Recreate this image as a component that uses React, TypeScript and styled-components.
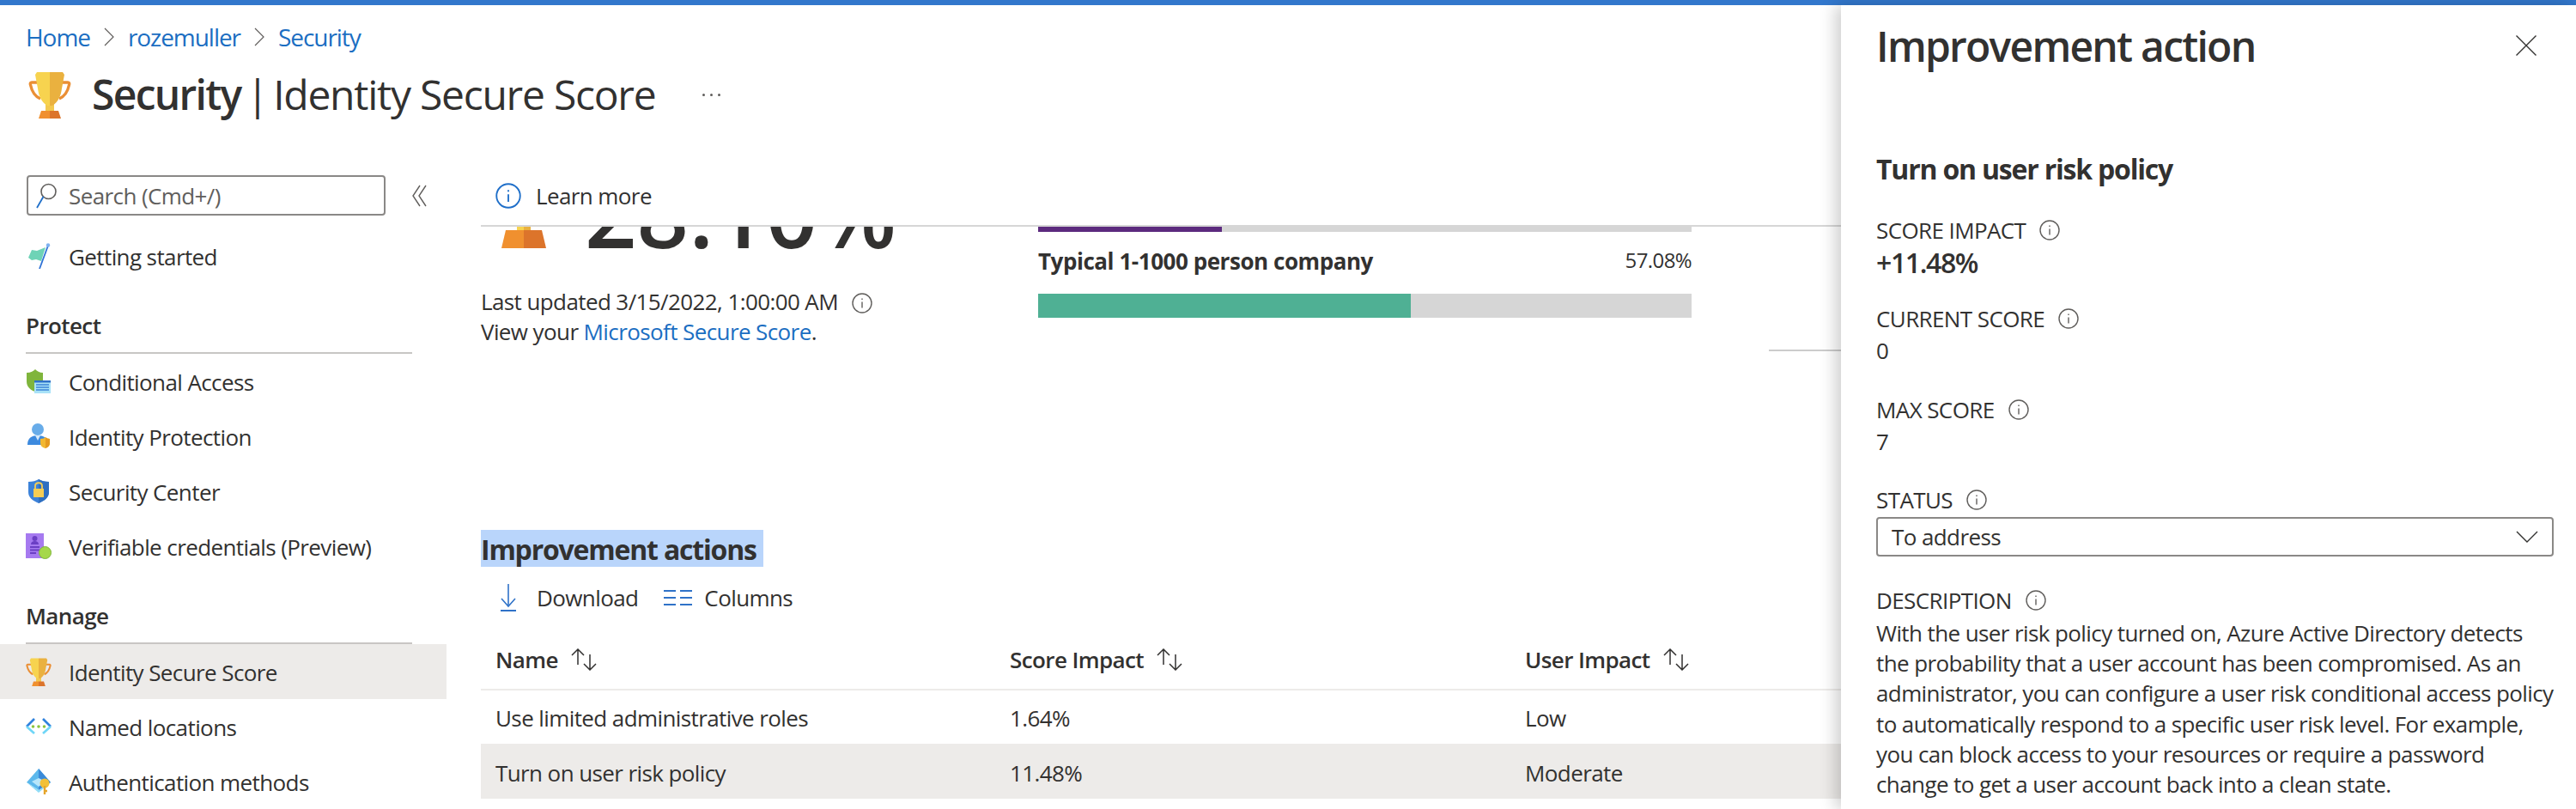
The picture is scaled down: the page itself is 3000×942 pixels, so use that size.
import React from 'react';
import styled, { createGlobalStyle } from 'styled-components';

const GlobalStyle = createGlobalStyle`
  html, body {
    margin: 0;
    padding: 0;
    background: #ffffff;
  }
  body {
    font-family: 'Open Sans', 'Noto Sans', sans-serif;
    font-size: 26px;
    letter-spacing: -0.6px;
    color: #323130;
  }
`;

const Page = styled.div`
  width: 3000px;
  height: 942px;
  overflow: hidden;
  display: flex;
  flex-direction: column;
`;

const TopBar = styled.div`
  height: 6px;
  flex: none;
  background: #3277cc;
`;

const Body = styled.div`
  flex: 1;
  display: flex;
  min-height: 0;
`;

const Main = styled.main`
  width: 2144px;
  flex: none;
  overflow: hidden;
`;

const Breadcrumb = styled.nav`
  height: 34px;
  margin: 20px 0 0 30px;
  display: flex;
  align-items: center;
  gap: 16px;
  font-size: 28px;
  letter-spacing: -1.05px;
`;

const Crumb = styled.a`
  color: #1b6ec2;
`;

const TitleRow = styled.header`
  height: 64px;
  margin: 18px 0 62px 33px;
  display: flex;
  align-items: center;
`;

const PageTitle = styled.h1`
  margin: 0 0 0 24px;
  font-size: 48px;
  font-weight: 400;
  letter-spacing: -1.25px;
  line-height: 64px;
  b {
    font-weight: 600;
    letter-spacing: -1.7px;
  }
`;

const TitleDivider = styled.span`
  margin: 0 -5px;
`;

const MoreDots = styled.span`
  margin-left: 55px;
  display: flex;
  gap: 6px;
  i {
    width: 3px;
    height: 3px;
    border-radius: 50%;
    background: #605e5c;
  }
`;

const Workspace = styled.div`
  display: flex;
`;

const Sidebar = styled.aside`
  width: 520px;
  flex: none;
`;

const SearchRow = styled.div`
  display: flex;
  align-items: center;
  margin: 0 0 15px 31px;
  gap: 31px;
`;

const SearchBox = styled.div`
  box-sizing: border-box;
  width: 418px;
  height: 47px;
  border: 2px solid #8a8886;
  border-radius: 4px;
  display: flex;
  align-items: center;
  padding-left: 9px;
  gap: 14px;
  color: #605e5c;
`;

const NavItem = styled.div<{ $active?: boolean }>`
  height: 64px;
  display: flex;
  align-items: center;
  padding-left: 30px;
  gap: 20px;
  background: ${(props) => (props.$active ? '#edebe9' : 'transparent')};
`;

const NavLabel = styled.span`
  position: relative;
  top: 1px;
`;

const NavSection = styled.div`
  box-sizing: border-box;
  height: 82px;
  margin: 0 40px 0 30px;
  padding-top: 31px;
  line-height: 36px;
  font-weight: 600;
  border-bottom: 2px solid #c8c6c4;
`;

const Content = styled.section`
  flex: 1;
  min-width: 0;
  margin-left: 40px;
`;

const CommandBar = styled.div`
  box-sizing: border-box;
  height: 60px;
  padding: 0 0 11px 17px;
  display: flex;
  align-items: center;
  gap: 17px;
  border-bottom: 2px solid #d6d6d6;
`;

const ScoreArea = styled.div`
  height: 353px;
  display: flex;
`;

const ScoreColumn = styled.div`
  width: 649px;
  flex: none;
`;

const ClippedScore = styled.div`
  height: 27px;
  overflow: hidden;
  display: flex;
  align-items: flex-start;
  padding-left: 24px;
`;

const ScoreValue = styled.div`
  margin: -69px 0 0 45px;
  font-size: 106px;
  font-weight: 600;
  letter-spacing: 0;
  line-height: 1;
  white-space: nowrap;
`;

const ScoreMeta = styled.div`
  margin-top: 43px;
  line-height: 35px;
  a {
    color: #1b6ec2;
  }
`;

const InlineInfo = styled.span`
  display: inline-flex;
  vertical-align: -4px;
  margin-left: 16px;
`;

const CompareColumn = styled.div`
  width: 761px;
  flex: none;
`;

const Track = styled.div<{ $height: number }>`
  height: ${(props) => props.$height}px;
  background: #d6d6d6;
`;

const Fill = styled.div<{ $color: string }>`
  height: 100%;
  background: ${(props) => props.$color};
`;

const CompareLabel = styled.div`
  box-sizing: border-box;
  height: 72px;
  padding-bottom: 4px;
  display: flex;
  align-items: center;
  justify-content: space-between;
  font-weight: 700;
  letter-spacing: -0.45px;
`;

const ComparePercent = styled.span`
  font-size: 24px;
  font-weight: 400;
  letter-spacing: -0.6px;
  position: relative;
  top: -2px;
`;

const FadedRule = styled.div`
  flex: 1;
  height: 2px;
  margin: 143px 0 0 90px;
  background: #cccccc;
`;

const SectionHeading = styled.h2`
  margin: 0;
  height: 43px;
  font-size: 32px;
  font-weight: 700;
  letter-spacing: -1.2px;
  line-height: 45px;
`;

const Selected = styled.span`
  display: inline-block;
  height: 43px;
  background: #b9d5fb;
  width: 329px;
`;

const Toolbar = styled.div`
  box-sizing: border-box;
  height: 76px;
  padding: 0 0 4px 23px;
  display: flex;
  align-items: center;
`;

const ToolButton = styled.div<{ $gap: number }>`
  display: flex;
  align-items: center;
  gap: ${(props) => props.$gap}px;
  margin-right: 30px;
`;

const TableHead = styled.div`
  box-sizing: border-box;
  height: 68px;
  margin-bottom: -2px;
  padding-bottom: 3px;
  border-bottom: 2px solid #edebe9;
  display: grid;
  grid-template-columns: 599px 600px 1fr;
  align-items: center;
  font-weight: 600;
`;

const HeadCell = styled.div`
  display: flex;
  align-items: center;
  gap: 13px;
  padding-left: 17px;
`;

const TableRow = styled.div<{ $selected?: boolean }>`
  height: 64px;
  display: grid;
  grid-template-columns: 599px 600px 1fr;
  align-items: center;
  background: ${(props) => (props.$selected ? '#edebe9' : 'transparent')};
`;

const Cell = styled.div`
  padding-left: 17px;
  position: relative;
  top: 2px;
`;

const Panel = styled.aside`
  flex: 1;
  box-sizing: border-box;
  padding: 15px 26px 0 41px;
  background: #ffffff;
  box-shadow: -6px 0 18px rgba(0, 0, 0, 0.2);
  position: relative;
`;

const PanelHeader = styled.div`
  height: 64px;
  display: flex;
  align-items: center;
  justify-content: space-between;
  padding-right: 20px;
`;

const PanelTitle = styled.h2`
  margin: 0;
  font-size: 48px;
  font-weight: 600;
  letter-spacing: -1.75px;
`;

const ActionTitle = styled.h3`
  margin: 90px 0 32px;
  height: 44px;
  font-size: 32px;
  font-weight: 700;
  letter-spacing: -1.2px;
  line-height: 44px;
`;

const FieldLabel = styled.div<{ $top?: number }>`
  height: 34px;
  margin-top: ${(props) => props.$top ?? 0}px;
  display: flex;
  align-items: center;
  gap: 16px;
  text-transform: uppercase;
`;

const FieldValue = styled.div`
  height: 42px;
  line-height: 40px;
`;

const ImpactValue = styled.div`
  height: 44px;
  line-height: 42px;
  font-size: 32px;
  font-weight: 600;
  letter-spacing: -1.4px;
`;

const StatusSelect = styled.div`
  box-sizing: border-box;
  height: 46px;
  margin-top: 3px;
  border: 2px solid #8a8886;
  border-radius: 4px;
  display: flex;
  align-items: center;
  justify-content: space-between;
  padding: 0 16px;
`;

const Description = styled.p`
  margin: 4px 0 0;
  line-height: 35.2px;
`;

function Trophy({ width, height }: { width: number; height: number }) {
  return (
    <svg width={width} height={height} viewBox="0 0 50 55">
      <g fill="none" stroke="#ea8f35" strokeWidth="3.4">
        <path d="M10 13H4c-1.5 0-2 1-1.6 2.5C4 23 7 29 14 32" />
        <path d="M40 13h6c1.5 0 2 1 1.6 2.5C46 23 43 29 36 32" />
      </g>
      <rect x="20" y="36" width="10" height="12" fill="#f3c94f" />
      <path d="M8 4l2-3h15v39h-3c-7-4-10-12-11-20z" fill="#f7d34f" />
      <path d="M42 4l-2-3H25v39h3c7-4 10-12 11-20z" fill="#eab13f" />
      <path d="M12 55l3-9h10v9z" fill="#f0902f" />
      <path d="M38 55l-3-9H25v9z" fill="#dc742b" />
    </svg>
  );
}

function TrophyBase() {
  return (
    <svg width="52" height="25" viewBox="0 0 52 25" style={{ flex: 'none' }}>
      <rect x="18" width="8" height="5" fill="#f7d34f" />
      <rect x="26" width="8" height="5" fill="#eab13f" />
      <path d="M0 25L5 4h21v21z" fill="#f0902f" />
      <path d="M52 25L47 4H26v21z" fill="#dc742b" />
    </svg>
  );
}

function InfoIcon({ color = '#605e5c', size = 24 }: { color?: string; size?: number }) {
  return (
    <svg width={size} height={size} viewBox="0 0 24 24" fill="none" stroke={color} strokeWidth={size > 24 ? 1.5 : 1.4}>
      <circle cx="12" cy="12" r="11" />
      <path d="M12 10.5v7" />
      <path d="M12 6.5v1.6" />
    </svg>
  );
}

function Chevron() {
  return (
    <svg width="12" height="22" viewBox="0 0 12 22" fill="none" stroke="#605e5c" strokeWidth="1.2">
      <path d="M1 1l10 10L1 21" />
    </svg>
  );
}

function SearchIcon() {
  return (
    <svg width="24" height="30" viewBox="0 0 24 30" fill="none">
      <circle cx="14.5" cy="10" r="8.5" stroke="#605e5c" strokeWidth="1.6" />
      <path d="M8.5 16L1 29" stroke="#1f6fc9" strokeWidth="1.8" />
    </svg>
  );
}

function CollapseIcon() {
  return (
    <svg width="17" height="26" viewBox="0 0 17 26" fill="none" stroke="#605e5c" strokeWidth="1.4">
      <path d="M9 1L1 13l8 12" />
      <path d="M16 1L8 13l8 12" />
    </svg>
  );
}

function DownloadIcon() {
  return (
    <svg width="18" height="32" viewBox="0 0 18 32" fill="none" stroke="#2f72c8" strokeWidth="1.6">
      <path d="M9 0v26" />
      <path d="M1 17l8 9 8-9" />
      <path d="M0 31h18" strokeWidth="2" />
    </svg>
  );
}

function ColumnsIcon() {
  return (
    <svg width="33" height="20" viewBox="0 0 33 20" fill="none" stroke="#2f72c8" strokeWidth="2">
      <path d="M0 2h14M19 2h14M0 10h14M19 10h14M0 18h14M19 18h14" />
    </svg>
  );
}

function SortArrows() {
  return (
    <svg width="34" height="26" viewBox="0 0 34 26" fill="none" stroke="#323130" strokeWidth="1.5">
      <path d="M10 1v18M3 8l7-7 7 7" />
      <path d="M24 7v18M17 18l7 7 7-7" />
    </svg>
  );
}

function CloseIcon() {
  return (
    <svg width="24" height="24" viewBox="0 0 24 24" fill="none" stroke="#323130" strokeWidth="1.4">
      <path d="M0.5 0.5l23 23M23.5 0.5l-23 23" />
    </svg>
  );
}

function SelectChevron() {
  return (
    <svg width="26" height="14" viewBox="0 0 26 14" fill="none" stroke="#323130" strokeWidth="1.4">
      <path d="M1 1l12 12L25 1" />
    </svg>
  );
}

function FlagIcon() {
  return (
    <svg width="30" height="30" viewBox="0 0 30 30">
      <path d="M3 17l4-9 6 1 10-4-5 16-6-2-5 1z" fill="#6ed3b6" />
      <path d="M16 30L26 3" stroke="#2f72d6" strokeWidth="1.8" />
      <circle cx="26" cy="2.500" r="2.200" fill="#7fb2f0" />
    </svg>
  );
}

function ConditionalIcon() {
  return (
    <svg width="30" height="30" viewBox="0 0 30 30">
      <path d="M1 5c5 0 8-2 10-4 2 2 5 4 9 4v10c0 6-4 10-9 12C5 25 1 21 1 15z" fill="#7fb53c" />
      <rect x="10" y="14" width="19" height="15" fill="#a9e2f7" />
      <rect x="10" y="14" width="19" height="2.5" fill="#2f72c8" />
      <path d="M12 19h15M12 22h15M12 25h15" stroke="#3b84d8" strokeWidth="1.4" />
    </svg>
  );
}

function PersonIcon() {
  return (
    <svg width="30" height="30" viewBox="0 0 30 30">
      <circle cx="14" cy="7" r="7" fill="#68ace9" />
      <path d="M2 25c0-7 4-11 12-11s12 4 12 11z" fill="#3d8ade" />
      <path d="M11 14h6l-3 6z" fill="#d5e9fb" />
      <path d="M17 18c3 0 5-1 6-2 1 1 3 2 5 2v5c0 3-2 5-5.500 6-3.500-1-5.500-3-5.500-6z" fill="#f2b730" />
      <path d="M23 16c1 1 3 2 5 2v5c0 3-2 5-5 6z" fill="#e5991f" />
    </svg>
  );
}

function ShieldLockIcon() {
  return (
    <svg width="30" height="30" viewBox="0 0 30 30">
      <path d="M3 4c5 0 9-1 12-3 3 2 7 3 12 3v12c0 6-5 10-12 13C8 26 3 22 3 16z" fill="#3c82d9" />
      <path d="M15 1c3 2 7 3 12 3v12c0 6-5 10-12 13z" fill="#2f6fc0" />
      <rect x="9" y="12" width="12" height="10" fill="#f6cd54" />
      <path d="M11 12V9c0-5 8-5 8 0v3" fill="none" stroke="#f6cd54" strokeWidth="1.8" />
    </svg>
  );
}

function CredentialIcon() {
  return (
    <svg width="30" height="30" viewBox="0 0 30 30">
      <rect width="21" height="29" fill="#a67af0" />
      <circle cx="10.500" cy="6" r="3" fill="#6b3fc4" />
      <path d="M6 13c0-3 2-4 4.500-4s4.500 1 4.500 4z" fill="#6b3fc4" />
      <path d="M5 16h11M5 19.500h11M5 23h7" stroke="#6b3fc4" strokeWidth="2" />
      <circle cx="22.500" cy="22.500" r="7" fill="#a5d84a" stroke="#7fb53c" strokeWidth="1" />
    </svg>
  );
}

function LocationsIcon() {
  return (
    <svg width="30" height="30" viewBox="0 0 30 30" fill="none" strokeWidth="2.600">
      <path d="M10 6L1 15" stroke="#2f82dd" />
      <path d="M1 15l9 8" stroke="#6fd6f7" />
      <path d="M20 6l9 9" stroke="#2f82dd" />
      <path d="M29 15l-9 8" stroke="#6fd6f7" />
      <circle cx="8.500" cy="15" r="1.800" fill="#8bc53f" stroke="none" />
      <circle cx="15" cy="15" r="1.800" fill="#8bc53f" stroke="none" />
      <circle cx="21.500" cy="15" r="1.800" fill="#8bc53f" stroke="none" />
    </svg>
  );
}

function AuthIcon() {
  return (
    <svg width="30" height="30" viewBox="0 0 30 30">
      <path d="M15 0L1 16l14 9 14-9z" fill="#5cb8ec" />
      <path d="M15 0v25l14-9z" fill="#3a8ad8" />
      <path d="M7 15l8-4 8 4-8 6z" fill="#b7e6fa" />
      <path d="M1 16l14 12 14-12-14 9z" fill="#8fdcf7" />
      <circle cx="22" cy="17" r="5.500" fill="#f2c037" />
      <path d="M22 20v10M22 26h3" stroke="#e5a52b" strokeWidth="2.400" />
    </svg>
  );
}

const protectItems = [
  { label: 'Conditional Access', icon: <ConditionalIcon /> },
  { label: 'Identity Protection', icon: <PersonIcon /> },
  { label: 'Security Center', icon: <ShieldLockIcon /> },
  { label: 'Verifiable credentials (Preview)', icon: <CredentialIcon /> },
];

const manageItems = [
  { label: 'Identity Secure Score', icon: <Trophy width={30} height={33} />, active: true },
  { label: 'Named locations', icon: <LocationsIcon /> },
  { label: 'Authentication methods', icon: <AuthIcon /> },
];

const actions = [
  { name: 'Use limited administrative roles', score: '1.64%', impact: 'Low' },
  { name: 'Turn on user risk policy', score: '11.48%', impact: 'Moderate', selected: true },
];

export default function App() {
  return (
    <Page>
      <GlobalStyle />
      <TopBar />
      <Body>
        <Main>
          <Breadcrumb>
            <Crumb>Home</Crumb>
            <Chevron />
            <Crumb>rozemuller</Crumb>
            <Chevron />
            <Crumb>Security</Crumb>
          </Breadcrumb>
          <TitleRow>
            <Trophy width={50} height={55} />
            <PageTitle>
              <b>Security</b> <TitleDivider>|</TitleDivider> Identity Secure Score
            </PageTitle>
            <MoreDots>
              <i />
              <i />
              <i />
            </MoreDots>
          </TitleRow>
          <Workspace>
            <Sidebar>
              <SearchRow>
                <SearchBox>
                  <SearchIcon />
                  Search (Cmd+/)
                </SearchBox>
                <CollapseIcon />
              </SearchRow>
              <NavItem>
                <FlagIcon />
                <NavLabel>Getting started</NavLabel>
              </NavItem>
              <NavSection>Protect</NavSection>
              {protectItems.map((item) => (
                <NavItem key={item.label}>
                  {item.icon}
                  <NavLabel>{item.label}</NavLabel>
                </NavItem>
              ))}
              <NavSection>Manage</NavSection>
              {manageItems.map((item) => (
                <NavItem key={item.label} $active={item.active}>
                  {item.icon}
                  <NavLabel>{item.label}</NavLabel>
                </NavItem>
              ))}
            </Sidebar>
            <Content>
              <CommandBar>
                <InfoIcon color="#1f6fc9" size={30} />
                Learn more
              </CommandBar>
              <ScoreArea>
                <ScoreColumn>
                  <ClippedScore>
                    <TrophyBase />
                    <ScoreValue>28.10%</ScoreValue>
                  </ClippedScore>
                  <ScoreMeta>
                    Last updated 3/15/2022, 1:00:00 AM
                    <InlineInfo>
                      <InfoIcon />
                    </InlineInfo>
                    <br />
                    View your <a>Microsoft Secure Score</a>.
                  </ScoreMeta>
                </ScoreColumn>
                <CompareColumn>
                  <Track $height={6}>
                    <Fill $color="#5c2a7e" style={{ width: `${(214 / 761) * 100}%` }} />
                  </Track>
                  <CompareLabel>
                    Typical 1-1000 person company
                    <ComparePercent>57.08%</ComparePercent>
                  </CompareLabel>
                  <Track $height={28}>
                    <Fill $color="#4fb094" style={{ width: '57.08%' }} />
                  </Track>
                </CompareColumn>
                <FadedRule />
              </ScoreArea>
              <SectionHeading>
                <Selected>Improvement actions</Selected>
              </SectionHeading>
              <Toolbar>
                <ToolButton $gap={24}>
                  <DownloadIcon />
                  Download
                </ToolButton>
                <ToolButton $gap={14}>
                  <ColumnsIcon />
                  Columns
                </ToolButton>
              </Toolbar>
              <TableHead>
                <HeadCell>
                  Name <SortArrows />
                </HeadCell>
                <HeadCell>
                  Score Impact <SortArrows />
                </HeadCell>
                <HeadCell>
                  User Impact <SortArrows />
                </HeadCell>
              </TableHead>
              {actions.map((action) => (
                <TableRow key={action.name} $selected={action.selected}>
                  <Cell>{action.name}</Cell>
                  <Cell>{action.score}</Cell>
                  <Cell>{action.impact}</Cell>
                </TableRow>
              ))}
            </Content>
          </Workspace>
        </Main>
        <Panel>
          <PanelHeader>
            <PanelTitle>Improvement action</PanelTitle>
            <CloseIcon />
          </PanelHeader>
          <ActionTitle>Turn on user risk policy</ActionTitle>
          <FieldLabel>
            Score impact <InfoIcon />
          </FieldLabel>
          <ImpactValue>+11.48%</ImpactValue>
          <FieldLabel $top={25}>
            Current score <InfoIcon />
          </FieldLabel>
          <FieldValue>0</FieldValue>
          <FieldLabel $top={30}>
            Max score <InfoIcon />
          </FieldLabel>
          <FieldValue>7</FieldValue>
          <FieldLabel $top={29}>
            Status <InfoIcon />
          </FieldLabel>
          <StatusSelect>
            To address
            <SelectChevron />
          </StatusSelect>
          <FieldLabel $top={34}>
            Description <InfoIcon />
          </FieldLabel>
          <Description>
            With the user risk policy turned on, Azure Active Directory detects the probability that a
            user account has been compromised. As an administrator, you can configure a user risk
            conditional access policy to automatically respond to a specific user risk level. For
            example, you can block access to your resources or require a password change to get a user
            account back into a clean state.
          </Description>
        </Panel>
      </Body>
    </Page>
  );
}
